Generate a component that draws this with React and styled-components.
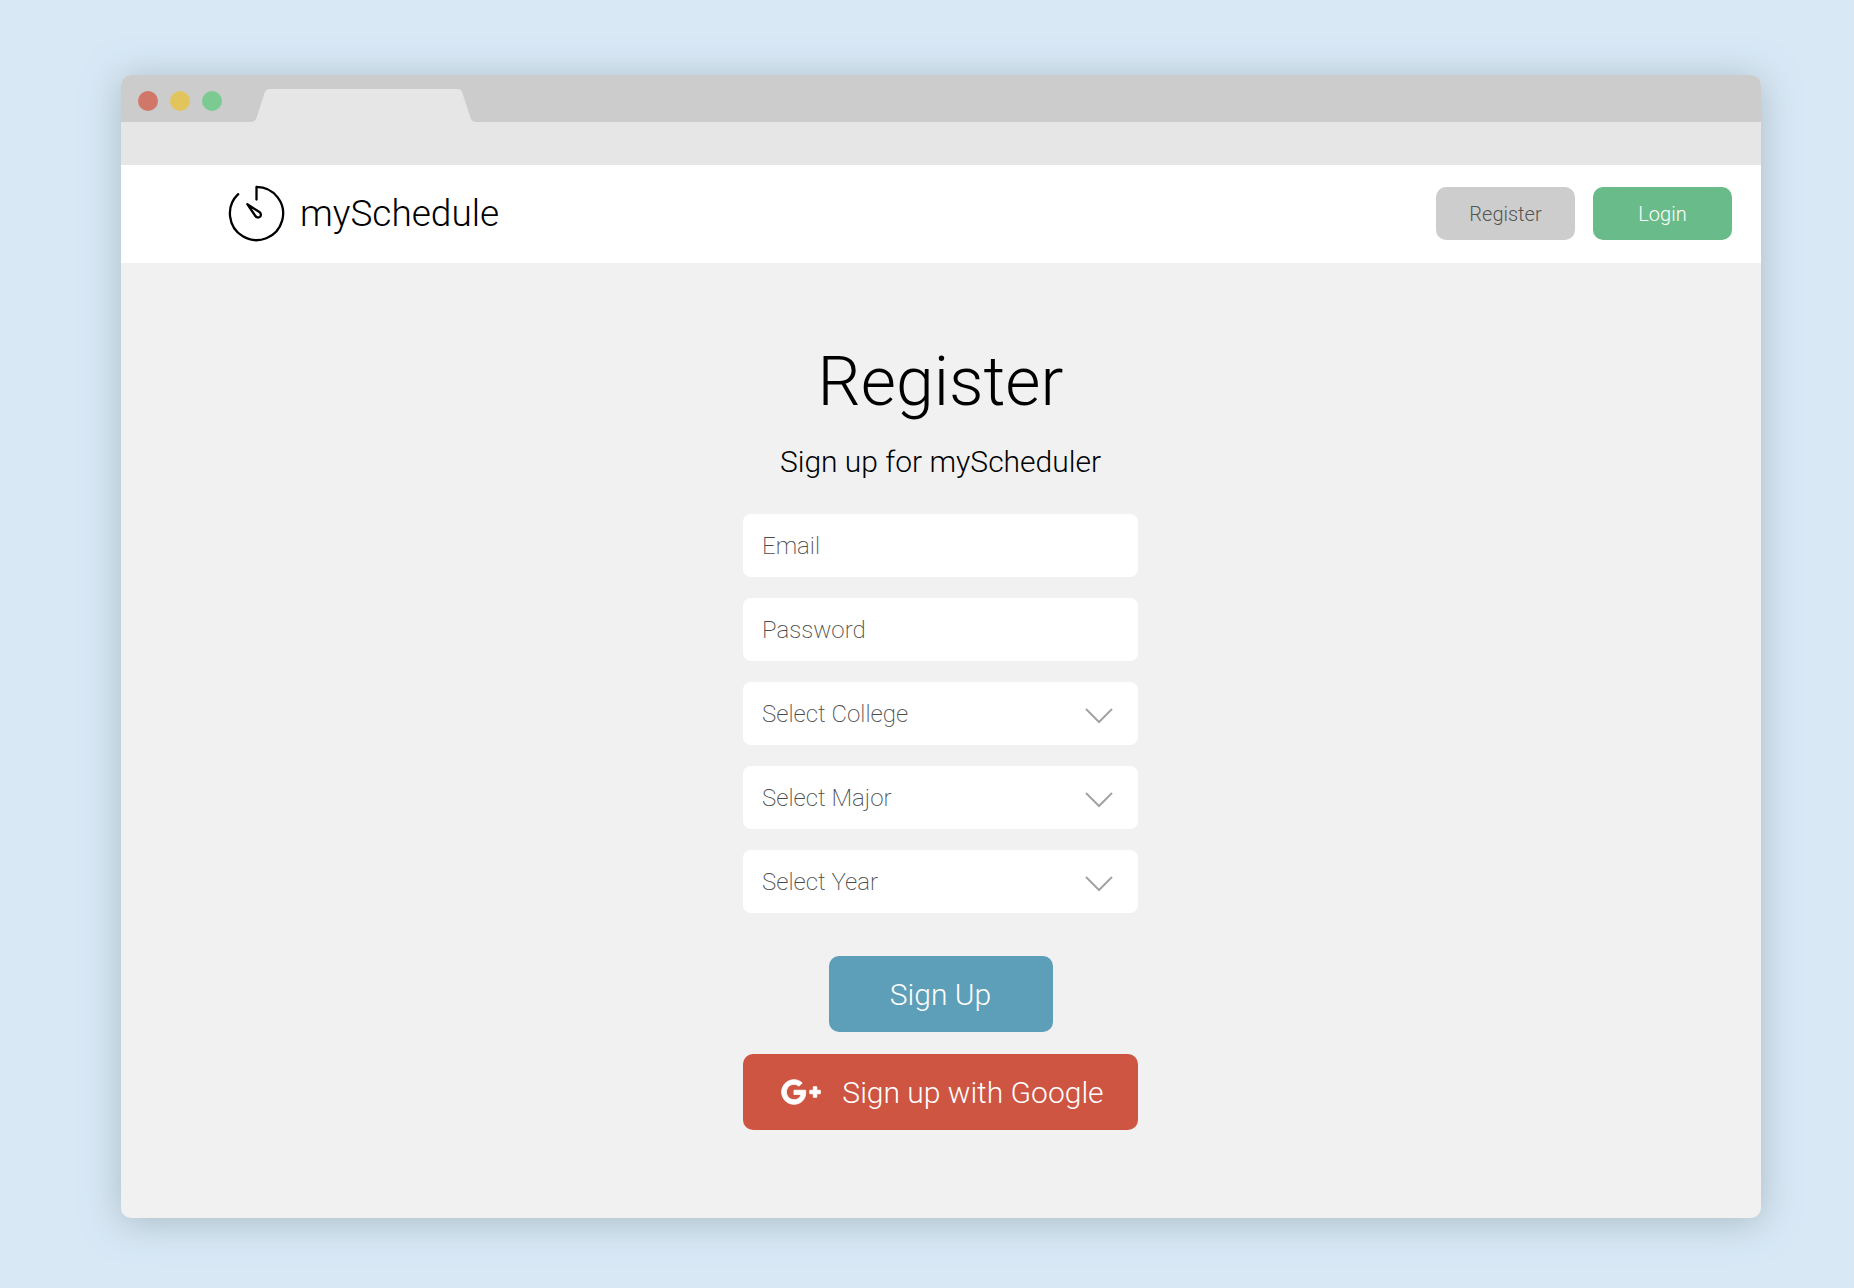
import React from "react";
import styled, { createGlobalStyle } from "styled-components";

const GlobalStyle = createGlobalStyle`
  *, *::before, *::after { box-sizing: border-box; }
  body {
    margin: 0;
    background: #d8e8f5;
    font-family: Roboto, "Open Sans", sans-serif;
    font-weight: 300;
    color: #000;
  }
  button, input, select { font: inherit; }
`;

const Desktop = styled.div`
  min-height: 100vh;
  display: flex;
  padding: 75px 93px 70px 121px;
`;

const BrowserWindow = styled.div`
  flex: 1;
  display: flex;
  flex-direction: column;
  border-radius: 10px;
  overflow: hidden;
  background: #f1f1f1;
  box-shadow: 0 4px 36px rgba(130, 152, 156, 0.55);
`;

const TabStrip = styled.div`
  height: 47px;
  display: flex;
  align-items: flex-end;
  background: #cccccc;
`;

const TrafficLights = styled.div`
  display: flex;
  gap: 12px;
  align-self: center;
  padding: 4px 28px 0 17px;
`;

const Light = styled.span`
  width: 20px;
  height: 20px;
  border-radius: 50%;
  background: ${(p) => p.$color};
`;

const TabShape = styled.svg`
  display: block;
  width: 226px;
  height: 33px;
`;

const Toolbar = styled.div`
  height: 43px;
  background: #e6e6e6;
`;

const Header = styled.header`
  display: flex;
  align-items: center;
  justify-content: space-between;
  height: 98px;
  padding: 0 29px 1px 107px;
  background: #fff;
`;

const Brand = styled.a`
  display: flex;
  align-items: center;
  gap: 15px;
  color: #000;
  font-size: 37px;
  line-height: 49px;
  text-decoration: none;
`;

const Nav = styled.nav`
  display: flex;
  gap: 18px;
`;

const Button = styled.button`
  border: 0;
  padding: 0;
  border-radius: 10px;
  cursor: pointer;
  color: ${(p) => p.$color || "#fff"};
  background: ${(p) => p.$bg};
`;

const NavButton = styled(Button)`
  width: 139px;
  height: 53px;
  font-size: 20px;
`;

const Main = styled.main`
  flex: 1;
  display: flex;
  flex-direction: column;
  align-items: center;
  padding: 79px 1px 84px 0;
`;

const Title = styled.h1`
  margin: 0;
  font-size: 68px;
  font-weight: 300;
  line-height: 80px;
`;

const Subtitle = styled.p`
  margin: 22px 0 34px;
  font-size: 30px;
  line-height: 36px;
`;

const Form = styled.form`
  display: flex;
  flex-direction: column;
  align-items: center;
  width: 395px;
  max-width: 100%;
`;

const Fields = styled.div`
  display: grid;
  gap: 21px;
  width: 100%;
  margin-bottom: 43px;
`;

const Field = styled.label`
  display: grid;
  align-items: center;
  height: 63px;
  border-radius: 8px;
  background: #fff;
  color: #4c4c4c;
  font-size: 24px;
  font-weight: 200;

  > * { grid-area: 1 / 1; }
`;

const TextBox = styled.input`
  width: 100%;
  height: 100%;
  border: 0;
  border-radius: 8px;
  padding: 0 19px;
  background: transparent;
  color: inherit;

  &::placeholder { color: inherit; opacity: 1; }
`;

const DropDown = styled.select`
  width: 100%;
  height: 100%;
  border: 0;
  border-radius: 8px;
  padding: 0 60px 0 19px;
  appearance: none;
  background: transparent;
  color: inherit;
`;

const Chevron = styled.svg`
  justify-self: end;
  width: 28px;
  height: 16px;
  margin: 4px 25px 0 0;
  pointer-events: none;
`;

const SubmitButton = styled(Button)`
  width: 224px;
  height: 76px;
  font-size: 30px;
`;

const GoogleButton = styled(Button)`
  display: flex;
  align-items: center;
  justify-content: center;
  gap: 21px;
  width: 100%;
  height: 76px;
  margin-top: 22px;
  padding-left: 4px;
  font-size: 30px;
`;

const TimerLogo = () => (
  <svg width="57" height="57" viewBox="0 0 57 57" fill="none" stroke="#000" strokeWidth="2.3" strokeLinecap="round" strokeLinejoin="round" aria-hidden="true">
    <path d="M28.5 14.5V1.900A26.600 26.600 0 1 1 10.2 9.200" />
    <path d="M19.3 19.2L31.4 27C33.4 28.6 33.2 30.9 31.9 31.9C30.3 33 28.4 32.5 27.4 31Z" />
  </svg>
);

const GooglePlus = () => (
  <svg width="40" height="26" viewBox="0.7 4.6 22.6 14.8" fill="#fff" stroke="#fff" strokeWidth="0.5" aria-hidden="true">
    <path d="M23 11h-2V9h-2v2h-2v2h2v2h2v-2h2zM8 11v2.4h4c-.2 1-1.2 3-4 3-2.4 0-4.3-2-4.3-4.4S5.6 7.600 8 7.600c1.400 0 2.300.6 2.800 1.100l1.900-1.800C11.500 5.700 9.900 5 8 5c-3.900 0-7 3.100-7 7s3.100 7 7 7c4 0 6.700-2.800 6.700-6.800 0-.5 0-.8-.1-1.200z" />
  </svg>
);

const selects = [
  { name: "college", label: "Select College" },
  { name: "major", label: "Select Major" },
  { name: "year", label: "Select Year" },
];

export default function App() {
  return (
    <>
      <GlobalStyle />
      <Desktop>
        <BrowserWindow>
          <TabStrip>
            <TrafficLights>
              <Light $color="#d1776a" />
              <Light $color="#e1c55c" />
              <Light $color="#7bca91" />
            </TrafficLights>
            <TabShape viewBox="0 0 226 33" aria-hidden="true">
              <path fill="#e6e6e6" d="M0 33Q5 33 6.500 29L14.500 4Q16 0 20 0H208Q211 0 212.500 4L220.500 29Q222 33 226 33Z" />
            </TabShape>
          </TabStrip>
          <Toolbar />
          <Header>
            <Brand href="#home">
              <TimerLogo />
              mySchedule
            </Brand>
            <Nav>
              <NavButton type="button" $bg="#cdcdcd" $color="#555">Register</NavButton>
              <NavButton type="button" $bg="#69bc89">Login</NavButton>
            </Nav>
          </Header>
          <Main>
            <Title>Register</Title>
            <Subtitle>Sign up for myScheduler</Subtitle>
            <Form onSubmit={(e) => e.preventDefault()}>
              <Fields>
                <Field>
                  <TextBox type="email" name="email" placeholder="Email" aria-label="Email" />
                </Field>
                <Field>
                  <TextBox type="password" name="password" placeholder="Password" aria-label="Password" />
                </Field>
                {selects.map((s) => (
                  <Field key={s.name}>
                    <DropDown name={s.name} aria-label={s.label} defaultValue="">
                      <option value="">{s.label}</option>
                    </DropDown>
                    <Chevron viewBox="0 0 28 16" fill="none" stroke="#a3a3a3" strokeWidth="2" aria-hidden="true">
                      <path d="M1 1L14 14L27 1" />
                    </Chevron>
                  </Field>
                ))}
              </Fields>
              <SubmitButton type="submit" $bg="#5d9eb9">Sign Up</SubmitButton>
              <GoogleButton type="button" $bg="#cd5542">
                <GooglePlus />
                Sign up with Google
              </GoogleButton>
            </Form>
          </Main>
        </BrowserWindow>
      </Desktop>
    </>
  );
}
